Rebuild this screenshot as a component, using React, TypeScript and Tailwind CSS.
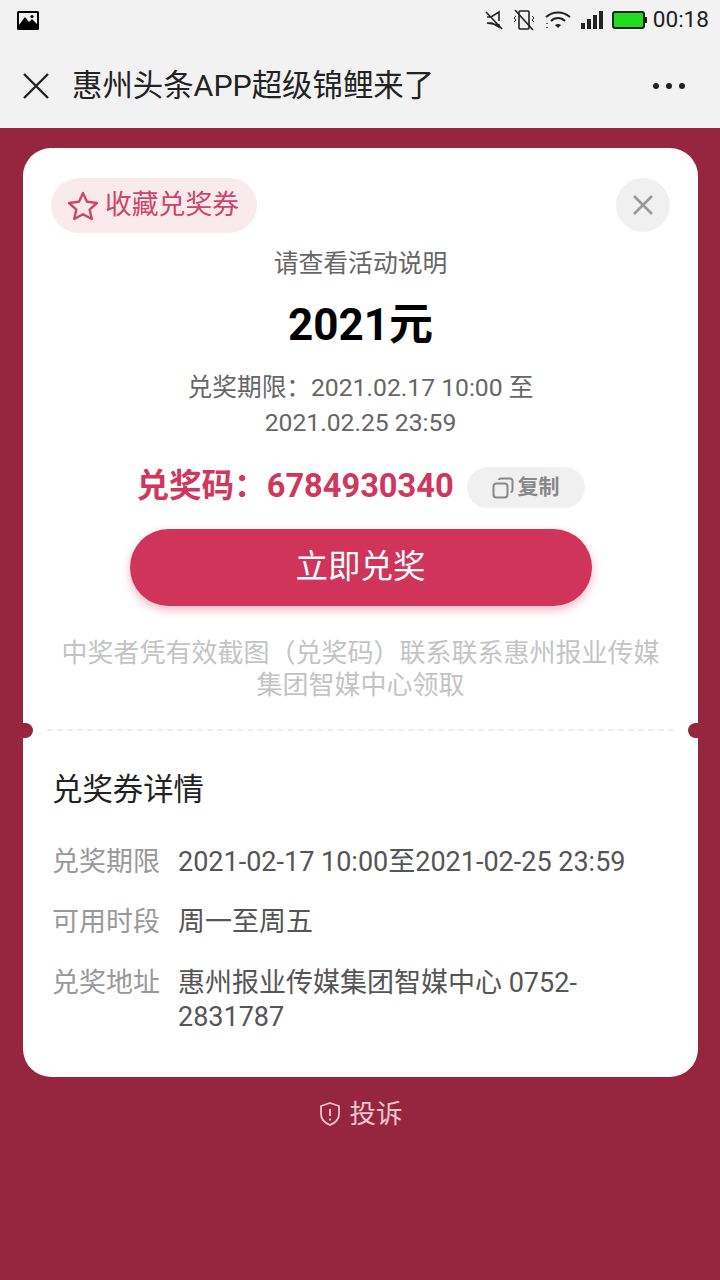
const font = { fontFamily: "Roboto, 'Noto Sans CJK SC', sans-serif" };

function StatusBar() {
  return (
    <div className="h-10 flex items-center pl-[17px] pr-[11px] justify-between">
      <svg width="22" height="20" viewBox="0 0 22 20">
        <rect x="0" y="1" width="22" height="19" rx="1.5" fill="#000" />
        <rect x="2" y="3" width="18" height="13" fill="#f2f2f2" />
        <path d="M2 15 L8 7 L12 12 L15 9 L20 14 L20 18 L2 18Z" fill="#000" />
        <circle cx="15" cy="6.5" r="1.6" fill="#000" />
      </svg>
      <div className="flex items-center">
        <svg width="20" height="20" viewBox="0 0 20 20" fill="none" stroke="#222" strokeWidth="1.6" className="mr-[9px]">
          <path d="M2 2 L18 19" />
          <path d="M3 7 H7 L15 2 V11 M15 15 V17 L8 13 H3 Z" />
        </svg>
        <svg width="22" height="22" viewBox="0 0 22 22" fill="none" stroke="#222" strokeWidth="1.6" className="mr-[10px]">
          <rect x="6" y="2" width="10" height="18" rx="1" />
          <path d="M2 1 L20 21" />
          <path d="M3 7 L1 9 L3 11 L1 13 M19 7 L21 9 L19 11 L21 13" strokeWidth="1" />
        </svg>
        <svg width="26" height="20" viewBox="0 0 26 20" fill="none" stroke="#222" strokeWidth="2" className="mr-[10px]">
          <path d="M1 7 C8 1 18 1 25 7" />
          <path d="M6 11 C10 7 16 7 20 11" />
          <path d="M10 15 L13 18 L16 15 C14 13.5 12 13.5 10 15Z" fill="#222" stroke="none" />
          <path d="M2 13 V14 M2 17 V18" strokeWidth="1.5" />
        </svg>
        <div className="flex items-end gap-[2px] h-[18px] mr-[9px]">
          <div className="w-[4px] h-[6px] bg-[#222]" />
          <div className="w-[4px] h-[10px] bg-[#222]" />
          <div className="w-[4px] h-[14px] bg-[#222]" />
          <div className="w-[4px] h-[18px] bg-[#222]" />
        </div>
        <div className="flex items-center mr-[6px]">
          <div className="w-[33px] h-[18px] border-2 border-[#222] rounded-[3px] bg-[#22dc22]" />
          <div className="w-[2px] h-[6px] bg-[#222]" />
        </div>
        <span className="text-[22.6px] leading-none text-[#222]">00:18</span>
      </div>
    </div>
  );
}

function NavBar() {
  return (
    <div className="h-[88px] flex items-center pl-[23px] pr-[35px] pt-[4px]">
      <svg width="26" height="26" viewBox="0 0 26 26" stroke="#222" strokeWidth="2.4" fill="none">
        <path d="M1 1 L25 25 M25 1 L1 25" />
      </svg>
      <div className="ml-[23px] text-[30.4px] leading-none text-[#222] flex-1">惠州头条APP超级锦鲤来了</div>
      <div className="flex gap-[7px]">
        <div className="w-[6px] h-[6px] rounded-full bg-[#222]" />
        <div className="w-[6px] h-[6px] rounded-full bg-[#222]" />
        <div className="w-[6px] h-[6px] rounded-full bg-[#222]" />
      </div>
    </div>
  );
}

function DetailRow({ label, value }: { label: string; value: string }) {
  return (
    <div className="flex text-[27px] leading-[34px]">
      <div className="w-[126px] shrink-0 text-[#999]">{label}</div>
      <div className="text-[#555] w-[420px]">{value}</div>
    </div>
  );
}

export default function App() {
  return (
    <div className="w-[720px] h-[1280px] overflow-hidden bg-[#96263f] flex flex-col" style={font}>
      <div className="bg-[#f2f2f2] h-[128px] shrink-0">
        <StatusBar />
        <NavBar />
      </div>

      <div className="mt-[20px] mx-[23px] w-[675px] h-[929px] bg-white rounded-[28px] relative flex flex-col">
        {/* top part */}
        <div className="h-[581px] px-[28px] pt-[30px] flex flex-col items-center">
          <div className="w-full flex justify-between">
            <div className="h-[55px] w-[206px] rounded-full bg-[#f9eaee] flex items-center pl-[16px] text-[#cf4468]">
              <svg width="32" height="32" viewBox="0 0 32 32" fill="none" stroke="#cf4468" strokeWidth="2.4" strokeLinejoin="round">
                <path d="M16 3 L20 11.8 L30 13 L22.6 19.6 L24.8 29 L16 24.2 L7.2 29 L9.4 19.6 L2 13 L12 11.8 Z" />
              </svg>
              <span className="ml-[6px] text-[26.8px] leading-none">收藏兑奖券</span>
            </div>
            <div className="w-[54px] h-[54px] rounded-full bg-[#f0f0f0] flex items-center justify-center">
              <svg width="20" height="20" viewBox="0 0 20 20" stroke="#999" strokeWidth="2.6" fill="none">
                <path d="M1 1 L19 19 M19 1 L1 19" />
              </svg>
            </div>
          </div>
          <div className="mt-[15px] text-[24.8px] leading-[32px] text-[#666]">请查看活动说明</div>
          <div className="mt-[20px] text-[44px] leading-[50px] font-bold text-black">2021元</div>
          <div className="mt-[20px] w-[400px] text-center text-[24.7px] leading-[35px] text-[#666]">
            兑奖期限：2021.02.17 10:00 至 2021.02.25 23:59
          </div>
          <div className="mt-[24px] flex items-center">
            <span className="text-[32.6px] leading-[42px] font-bold text-[#d0375d] whitespace-nowrap">兑奖码：6784930340</span>
            <div className="ml-[13px] mt-[3px] w-[118px] h-[41px] rounded-full bg-[#f0f0f0] flex items-center justify-center">
              <svg width="22" height="22" viewBox="0 0 22 22" fill="none" stroke="#888" strokeWidth="2">
                <rect x="1.5" y="6.5" width="14" height="14" rx="3" />
                <path d="M7 3 Q7 1.5 9 1.5 H18 Q20.5 1.5 20.5 4 V13 Q20.5 15 18.5 15" />
              </svg>
              <span className="ml-[4px] text-[21px] leading-none font-bold text-[#888]">复制</span>
            </div>
          </div>
          <div className="mt-[21px] w-[462px] h-[77px] shrink-0 rounded-full bg-[#d0345b] shadow-[0_4px_10px_rgba(208,52,91,0.35)] flex items-center justify-center text-white text-[32.5px] leading-none">
            立即兑奖
          </div>
          <div className="mt-[31px] w-[620px] text-center text-[26px] leading-[32px] text-[#c4c4c4]">
            中奖者凭有效截图（兑奖码）联系联系惠州报业传媒集团智媒中心领取
          </div>
        </div>

        {/* ticket notches */}
        <div className="absolute left-0 top-[575px] w-[10px] h-[15px] rounded-r-full bg-[#96263f]" />
        <div className="absolute right-0 top-[575px] w-[10px] h-[15px] rounded-l-full bg-[#96263f]" />
        <div className="mx-[24px] border-t-2 border-dashed border-[#eeeeee]" />

        {/* details */}
        <div className="pl-[29px] pt-[40px] flex flex-col">
          <div className="text-[30.4px] leading-[38px] text-[#222]">兑奖券详情</div>
          <div className="mt-[37px] flex flex-col gap-[27px]">
            <div className="flex text-[27px] leading-[32px]">
              <div className="w-[126px] shrink-0 text-[#999]">兑奖期限</div>
              <div className="text-[#555] whitespace-nowrap">2021-02-17 10:00至2021-02-25 23:59</div>
            </div>
            <DetailRow label="可用时段" value="周一至周五" />
            <DetailRow label="兑奖地址" value="惠州报业传媒集团智媒中心 0752-2831787" />
          </div>
        </div>
      </div>

      <div className="mt-[20px] flex items-center justify-center text-[26.5px] leading-[34px] text-[#ecc5cd]">
        <svg width="24" height="26" viewBox="0 0 24 26" fill="none" stroke="#ecc5cd" strokeWidth="1.8" strokeLinejoin="round">
          <path d="M12 2 L21 5 V13 C21 18 17 22 12 24 C7 22 3 18 3 13 V5 Z" />
          <path d="M12 8 V15 M12 17.5 V19.5" />
        </svg>
        <span className="ml-[8px]">投诉</span>
      </div>
    </div>
  );
}
